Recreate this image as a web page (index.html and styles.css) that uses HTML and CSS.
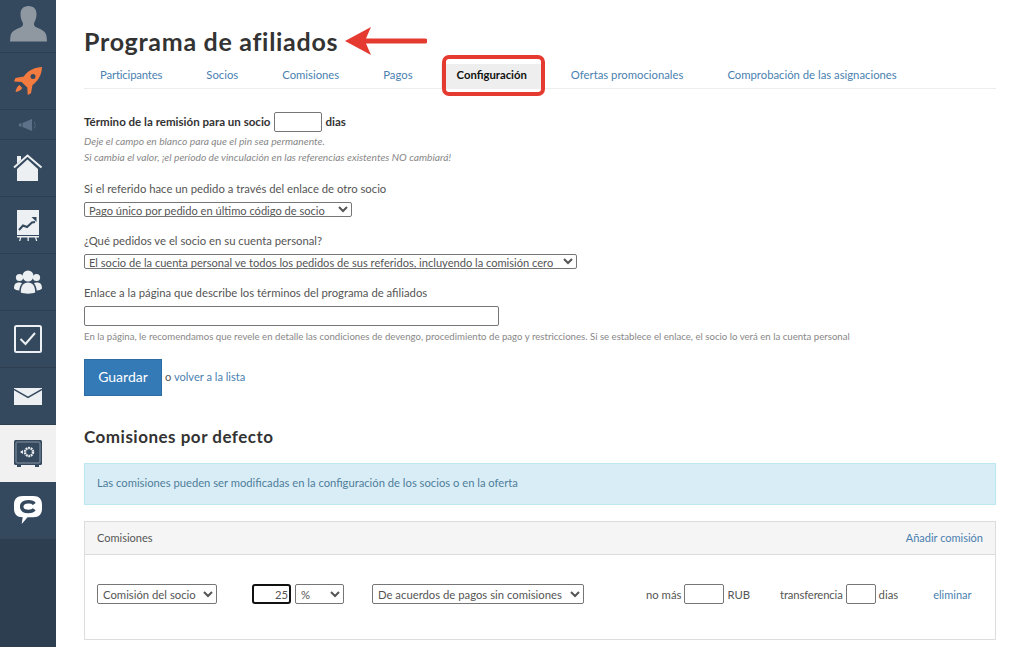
FILE: index.html
```html
<!DOCTYPE html>
<html lang="es">
<head>
<meta charset="utf-8">
<title>Programa de afiliados</title>
<link rel="stylesheet" href="styles.css">
</head>
<body>
<div class="app">
  <nav class="side">
    <a class="si si-user"><svg width="37" height="36" viewBox="0 0 37 36"><path fill="#8f98a1" d="M18.500 0c-5.500 0-8.200 3.500-8 8.500.1 3 .9 5.500 2 7.500.8 1.500.7 3.800-.8 4.700C8 22.800 1.500 24 .5 30L0 35.500h37l-.5-5.500c-1-6-7.500-7.200-11.200-9.300-1.500-.9-1.600-3.200-.8-4.700 1.100-2 1.900-4.500 2-7.500.2-5-2.500-8.500-8-8.500z"/></svg></a>
    <a class="si si-rocket"><svg width="28" height="28" viewBox="0 0 28 28"><path fill="#f47b3f" d="M28 0c-7 .5-12.500 2.800-16.500 7.300L9.800 9.500 1.500 11 0 14.500l7.500.4 5.800 5.600.4 7.500 3.300-1.700 1.500-8.200 2-1.700C25 12.500 27.800 7 28 0zm-9 7a2.500 2.500 0 1 1 0 5 2.500 2.500 0 0 1 0-5z"/><path fill="#f47b3f" d="M5.500 18c-1.800.8-3.400 3.500-4 7 3.300-.5 6-2.200 6.800-4z"/></svg></a>
    <a class="si si-sound"><svg width="18" height="12" viewBox="0 0 18 12"><path fill="#5d7188" d="M0 4.500h2.500v3H0zM3.500 4 13 0v12L3.500 8z"/><path fill="none" stroke="#4f6379" d="M15 2.500c1.500 2 1.500 5 0 7"/></svg></a>
    <a class="si"><svg width="30" height="28" viewBox="0 0 30 28"><path fill="#edf0f2" d="M4 15 14.500 5.500 25 15v12H4zM4 2h4v4l-4 3.400z"/><path fill="none" stroke="#edf0f2" stroke-width="2" d="M1 13.500 14.500 1.500 28.500 13.500"/></svg></a>
    <a class="si"><svg width="22" height="31" viewBox="0 0 22 31"><path fill="#edf0f2" d="M0 0h22v25H0z"/><path fill="#edf0f2" d="M0 26h22v1.500H0zM3 27.500h1.300l-1 3.500H2zM18 27.500h1.300l1 3.500H19zM10.500 27.500h1.300v3.500h-1.300z"/><path fill="none" stroke="#34495e" stroke-width="2" d="M2 20l4-4.500 4 1.500 5-4.500 3-.5"/><path fill="#34495e" d="M14.500 7h5v5z"/></svg></a>
    <a class="si"><svg width="28" height="24" viewBox="0 0 28 24"><g fill="#edf0f2"><circle cx="14" cy="6" r="5.500"/><circle cx="5.500" cy="7.500" r="3.600"/><circle cx="22.500" cy="7.500" r="3.600"/><path d="M0 18.500c0-4 1.500-6 5-6 1.500 0 2.500.3 3 1-1.500 1.500-2.500 4-2.700 7C3 20.500 1 19.500 0 18.500zM28 18.500c0-4-1.500-6-5-6-1.500 0-2.500.3-3 1 1.500 1.500 2.500 4 2.700 7 2.300 0 4.300-1 5.300-2z"/><path d="M6.800 22.500c0-6.500 2.500-10 7.200-10s7.200 3.500 7.200 10c-3 1.500-11.400 1.500-14.400 0z"/></g></svg></a>
    <a class="si"><svg width="28" height="28" viewBox="0 0 28 28"><rect x="1" y="1" width="26" height="26" rx="1.500" fill="none" stroke="#edf0f2" stroke-width="2"/><path fill="none" stroke="#edf0f2" stroke-width="2" d="M6.500 14l5 5 9.500-11"/></svg></a>
    <a class="si"><svg width="28" height="17" viewBox="0 0 28 17"><path fill="#edf0f2" d="M0 0h28v17H0z"/><path fill="none" stroke="#34495e" stroke-width="1.500" d="M0 1.500l14 8 14-8"/></svg></a>
    <a class="si si-active"><svg width="28" height="27" viewBox="0 0 28 27"><rect width="28" height="25" rx="1.500" fill="#34495e"/><rect x="2" y="2" width="24" height="21" rx="1" fill="none" stroke="#8795a3"/><path fill="#34495e" d="M3 25h4v2H3zM21 25h4v2h-4z"/><circle cx="15" cy="12" r="4" fill="none" stroke="#edf0f2" stroke-width="2.400" stroke-dasharray="1.800 .7"/><path fill="#edf0f2" d="M6 12l3-2v4z"/></svg></a>
    <a class="si si-chat"><svg width="28" height="29" viewBox="0 0 29 30"><path fill="#fff" d="M9 0h11c6 0 9 3 9 9v4c0 6-3 9-9 9h-6l-6 7 1-7c-6 0-9-3-9-9V9c0-6 3-9 9-9z"/><path fill="none" stroke="#34495e" stroke-width="3.600" d="M21 8.200c-1-1.400-3-2.200-6-2.200-4.500 0-7 2-7 5s2.500 5 7 5c3 0 5-.8 6-2.200"/></svg></a>
  </nav>
  <main class="main">
    <h1 class="title">Programa de afiliados</h1>
    <ul class="tabs">
      <li class="tab tab-first"><a>Participantes</a></li>
      <li class="tab"><a>Socios</a></li>
      <li class="tab"><a>Comisiones</a></li>
      <li class="tab"><a>Pagos</a></li>
      <li class="tab tab-on"><a>Configuración</a></li>
      <li class="tab"><a>Ofertas promocionales</a></li>
      <li class="tab"><a>Comprobación de las asignaciones</a></li>
    </ul>
    <section class="term">
      <div class="term-row"><b>Término de la remisión para un socio</b><input class="inp inp-term" type="text"><b>dias</b></div>
      <p class="hint hint-first">Deje el campo en blanco para que el pin sea permanente.</p>
      <p class="hint">Si cambia el valor, ¡el período de vinculación en las referencias existentes NO cambiará!</p>
    </section>
    <div class="field field-a">
      <label class="lab">Si el referido hace un pedido a través del enlace de otro socio</label>
      <select class="sel sel-a"><option>Pago único por pedido en último código de socio</option></select>
    </div>
    <div class="field field-b">
      <label class="lab">¿Qué pedidos ve el socio en su cuenta personal?</label>
      <select class="sel sel-b"><option>El socio de la cuenta personal ve todos los pedidos de sus referidos, incluyendo la comisión cero</option></select>
    </div>
    <div class="field field-c">
      <label class="lab">Enlace a la página que describe los términos del programa de afiliados</label>
      <input class="inp inp-link" type="text">
      <p class="note">En la página, le recomendamos que revele en detalle las condiciones de devengo, procedimiento de pago y restricciones. Si se establece el enlace, el socio lo verá en la cuenta personal</p>
    </div>
    <div class="actions"><button class="btn">Guardar</button><span class="or">o <a class="lnk">volver a la lista</a></span></div>
    <h2 class="sub">Comisiones por defecto</h2>
    <div class="info">Las comisiones pueden ser modificadas en la configuración de los socios o en la oferta</div>
    <div class="panel">
      <div class="panel-head"><span>Comisiones</span><a class="lnk">Añadir comisión</a></div>
      <div class="panel-body">
        <select class="sel sel-tall sel-c"><option>Comisión del socio</option></select>
        <input class="inp inp-val" type="text" value="25">
        <select class="sel sel-tall sel-d"><option>%</option></select>
        <select class="sel sel-tall sel-e"><option>De acuerdos de pagos sin comisiones</option></select>
        <span class="cell cell-max">no más</span><input class="inp inp-sm inp-max" type="text"><span class="cell">RUB</span>
        <span class="cell cell-tr">transferencia</span><input class="inp inp-sm inp-days" type="text"><span class="cell">dias</span>
        <a class="lnk cell-del">eliminar</a>
      </div>
    </div>
    <div class="callout"></div>
    <svg class="arrow" width="82" height="28" viewBox="0 0 82 28"><path fill="#e53a30" d="M0 14 26 0l-5 11.500h59a2.500 2.500 0 0 1 0 5H21L26 28z"/></svg>
  </main>
</div>
</body>
</html>
```
FILE: styles.css
```css
html, body { margin: 0; height: 100%; overflow: hidden; background: #fff; }
body { font-family: Lato, "Open Sans", sans-serif; font-size: 11.3px; color: #555; }
.app { display: flex; height: 647px; }
.side { width: 56px; flex: none; background: #2c3e50; display: flex; flex-direction: column; }
.si { height: 56px; flex: none; display: flex; align-items: center; justify-content: center; background: #34495e; border-bottom: 1px solid #2c3e50; }
.si-user { height: 46px; padding-top: 6px; align-items: flex-start; }
.si-sound { height: 29px; }
.si-active { background: #f1f1f1; border-bottom-color: #f1f1f1; }
.si-chat { border-bottom: 0; height: 57px; }
.main { position: relative; flex: 1; padding: 0 27px 0 28px; min-width: 0; }
.title { margin: 27px 0 0; font-size: 25px; line-height: 29px; font-weight: 700; color: #333; letter-spacing: .7px; }
.tabs { list-style: none; margin: 3px 0 0; padding: 0; display: flex; align-items: flex-end; border-bottom: 1px solid #eee; height: 29px; }
.tab { padding: 0 16px; height: 24px; line-height: 22px; margin-right: 12px; color: #4a7fb0; white-space: nowrap; }
.tab-first { letter-spacing: -.15px; }
.tab-on { color: #111; font-weight: 700; background: #eee; }
.term { margin-top: 23px; }
.term-row { display: flex; align-items: center; gap: 3px; height: 20px; color: #333; font-size: 11.55px; }
.term-row b { font-weight: 700; padding-bottom: 2px; }
.inp { box-sizing: border-box; border: 1px solid #767676; border-radius: 2px; background: #fff; padding: 1px 2px; font: inherit; color: #555; display: block; margin: 0; }
.inp-term { width: 48px; height: 20px; margin-right: 1px; }
.hint { margin: 0; font-size: 10.25px; line-height: 16px; font-style: italic; color: #888; }
.hint-first { margin-top: 1px; }
.lab { display: block; line-height: 14px; }
.sel { display: block; box-sizing: border-box; height: 15px; font: inherit; font-size: 11.1px; color: #555; background: #fff; border: 1px solid #767676; border-radius: 2px; padding: 0; margin: 0; }
.field-a { margin-top: 17px; }
.field-a .sel { margin-top: 6px; width: 268px; }
.field-b { margin-top: 17px; }
.field-b .sel { margin-top: 6px; width: 493px; }
.field-c { margin-top: 17px; }
.inp-link { width: 415px; height: 20px; margin-top: 6px; }
.note { margin: 2px 0 0; font-size: 9.63px; line-height: 16px; color: #888; white-space: nowrap; }
.actions { display: flex; align-items: center; margin-top: 15px; }
.btn { width: 78px; height: 37px; background: #337ab7; border: 1px solid #2e6da4; color: #fff; font: inherit; font-size: 14px; padding: 0 0 2px; }
.or { margin-left: 3px; position: relative; top: -1px; font-size: 11.1px; }
.lnk { color: #4a7fb0; }
.sub { margin: 31px 0 0; font-size: 17px; line-height: 20px; font-weight: 700; color: #333; letter-spacing: .5px; }
.info { margin-top: 16px; height: 42px; box-sizing: border-box; line-height: 38px; padding-left: 12px; background: #d9edf7; border: 1px solid #bce8f1; color: #4f7d99; font-size: 11.22px; }
.panel { margin-top: 16px; border: 1px solid #ddd; height: 119px; box-sizing: border-box; }
.panel-head { height: 32px; background: #f5f5f5; border-bottom: 1px solid #ddd; display: flex; justify-content: space-between; align-items: center; padding: 0 12px 2px; box-sizing: content-box; height: 30px; font-size: 11px; }
.panel-body { display: flex; align-items: center; padding: 29px 0 0 12px; }
.sel-tall { height: 20px; font-size: 11.3px; padding-left: 1px; }
.sel-c { width: 120px; }
.inp-val { width: 39px; height: 20px; margin-left: 35px; text-align: right; border: 2px solid #111; border-radius: 3px; padding: 0 1px 0 0; }
.sel-d { width: 49px; margin-left: 4px; }
.sel-e { width: 212px; margin-left: 28px; }
.cell { white-space: nowrap; }
.cell-max { margin-left: 62px; }
.inp-sm { height: 20px; margin: 0 3px; }
.inp-max { width: 40px; }
.inp-days { width: 30px; }
.cell-tr { margin-left: 30px; letter-spacing: -.15px; }
.cell-del { margin-left: 35px; font-size: 11px; }
.callout { position: absolute; left: 386px; top: 55px; width: 103px; height: 41px; box-sizing: border-box; border: 4px solid #e53a30; border-radius: 7px; pointer-events: none; }
.arrow { position: absolute; left: 289px; top: 27px; }
```
